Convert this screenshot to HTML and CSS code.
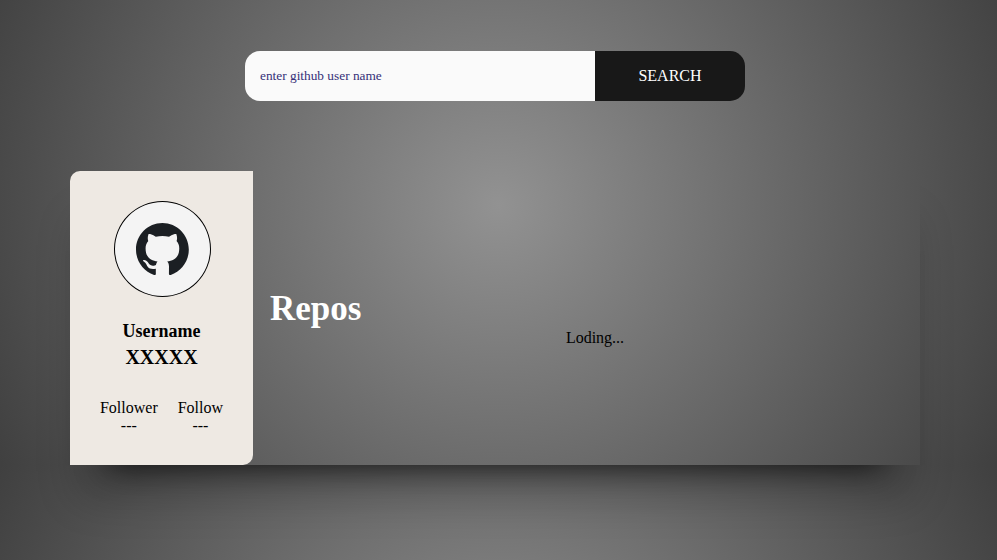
FILE: index.html
```html
<!DOCTYPE html>
<html lang="en">
<head>
<meta charset="utf-8">
<title>Github Finder</title>
<link rel="stylesheet" href="styles.css">
</head>
<body>
<form class="search">
  <input class="search-input" type="text" placeholder="enter github user name">
  <button class="search-button" type="button">SEARCH</button>
</form>
<main class="panel">
  <aside class="profile">
    <div class="avatar">
      <svg class="logo" viewBox="0 0 98 96"><path fill="#1b1f23" fill-rule="evenodd" clip-rule="evenodd" d="M48.854 0C21.839 0 0 22 0 49.217c0 21.756 13.993 40.172 33.405 46.69 2.427.49 3.316-1.059 3.316-2.362 0-1.141-.08-5.052-.08-9.127-13.59 2.934-16.42-5.867-16.42-5.867-2.184-5.704-5.42-7.17-5.42-7.17-4.448-3.015.324-3.015.324-3.015 4.934.326 7.523 5.052 7.523 5.052 4.367 7.496 11.404 5.378 14.235 4.074.404-3.178 1.699-5.378 3.074-6.6-10.839-1.141-22.243-5.378-22.243-24.283 0-5.378 1.94-9.778 5.014-13.2-.485-1.222-2.184-6.275.486-13.038 0 0 4.125-1.304 13.426 5.052a46.97 46.97 0 0 1 12.214-1.63c4.125 0 8.33.571 12.213 1.63 9.302-6.356 13.427-5.052 13.427-5.052 2.67 6.763.97 11.816.485 13.038 3.155 3.422 5.015 7.822 5.015 13.2 0 18.905-11.404 23.06-22.324 24.283 1.78 1.548 3.316 4.481 3.316 9.126 0 6.6-.08 11.897-.08 13.526 0 1.304.89 2.853 3.316 2.364 19.412-6.52 33.405-24.935 33.405-46.691C97.707 22 75.788 0 48.854 0z"/></svg>
    </div>
    <h3 class="label">Username</h3>
    <h2 class="name">XXXXX</h2>
    <div class="stats">
      <div>Follower<br>---</div>
      <div>Follow<br>---</div>
    </div>
  </aside>
  <section class="repos">
    <h1 class="title">Repos</h1>
    <p class="loading">Loding...</p>
  </section>
</main>
</body>
</html>
```
FILE: styles.css
```css
* { box-sizing: border-box; margin: 0; padding: 0; }
html { height: 100%; overflow: hidden; }
body {
  height: 100%;
  padding-top: 51px;
  font: 16px/18px "Liberation Serif", "Times New Roman", serif;
  color: #000;
  background:
    radial-gradient(circle at 50% 205px, #929292, #404040 561px) 0 0 / 100% 465px no-repeat,
    radial-gradient(circle at 50% 260px, #929292, #404040 561px) 0 465px / 100% 465px no-repeat;
}
.search { display: flex; width: 500px; height: 50px; margin-left: 245px; }
.search-input {
  width: 350px;
  padding: 0 15px;
  border: 0;
  border-radius: 15px 0 0 15px;
  background: #fafafa;
  font: 13.333px "Liberation Serif", serif;
}
.search-input::placeholder { color: #353078; opacity: 1; }
.search-button {
  width: 150px;
  border: 0;
  border-radius: 0 15px 15px 0;
  background: #181818;
  color: #fff;
  font: 16px "Liberation Serif", serif;
}
.panel {
  display: flex;
  width: 850px;
  height: 294px;
  margin: 70px 0 0 70px;
  box-shadow: 0 40px 40px -8px rgba(0, 0, 0, .19), 0 40px 30px -40px rgba(0, 0, 0, .8);
}
.profile {
  display: flex;
  flex-direction: column;
  align-items: center;
  width: 183px;
  padding-top: 30px;
  border-radius: 10px 0 10px 0;
  background: #eee9e3;
}
.avatar {
  display: flex;
  align-items: center;
  justify-content: center;
  width: 97px;
  height: 96px;
  margin-left: 2px;
  border: 1px solid #000;
  border-radius: 50%;
  background: #f4f4f4;
}
.logo { width: 53px; height: 52px; }
.label { margin-top: 24px; font-size: 18px; line-height: 21px; }
.name { margin-top: 4px; font-size: 20px; line-height: 23px; }
.stats { display: flex; gap: 20px; margin-top: 30px; text-align: center; }
.repos { flex: 1; padding: 117px 0 0 17px; }
.title { color: #fff; font-size: 35px; line-height: 41px; }
.loading { text-align: center; }
```
